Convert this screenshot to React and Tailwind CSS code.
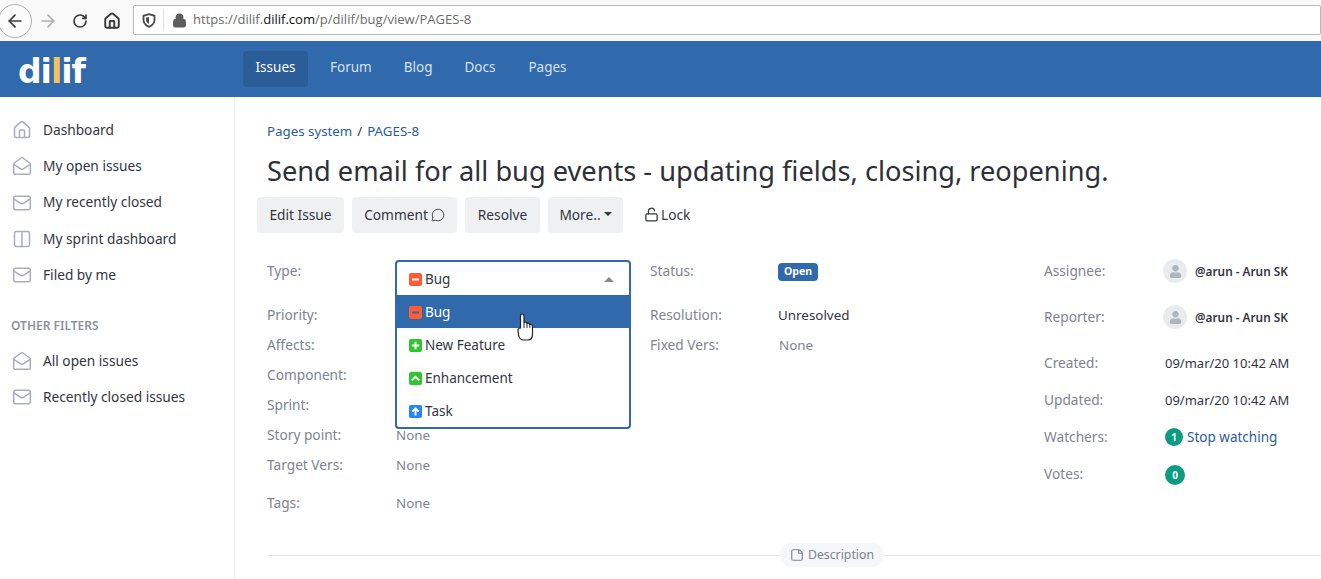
import { ArrowLeft, ArrowRight, RotateCw, Home, Lock, LockOpen, Mail, MailOpen, Columns2, MessageCircle, StickyNote } from "lucide-react";
import { FaUser } from "react-icons/fa";

const font = "[font-family:'Noto_Sans',sans-serif]";

const SideItem = ({ icon: Icon, label }) => (
  <div className="flex items-center h-[36.3px] pl-[12px]">
    <Icon size={20} strokeWidth={1.8} className="text-[#a9adbd] shrink-0" />
    <span className="ml-[11px] text-[13.7px] text-[#33363f]">{label}</span>
  </div>
);

const Field = ({ label, value, h }) => (
  <div className={`flex ${h}`}>
    <div className="w-[129px] text-[#80848f] text-[13.7px] leading-5">{label}</div>
    <div className="text-[#80848f] text-[13.4px] leading-5">{value}</div>
  </div>
);

const TypeIcon = ({ color, children }) => (
  <svg width="13" height="13" viewBox="0 0 13 13" className="shrink-0">
    <rect width="13" height="13" rx="2" fill={color} />
    {children}
  </svg>
);

const Minus = ({ stroke = "#fff" }) => <path d="M3 6.5h7" stroke={stroke} strokeWidth="2" />;

const Avatar = () => (
  <div className="w-[24px] h-[24px] rounded-full bg-[#e9ecef] flex items-center justify-center overflow-hidden">
    <FaUser size={13} className="text-[#adb5bd]" />
  </div>
);

const Person = () => (
  <div className="flex items-center self-start h-[24px] gap-[8px] -mt-[2px] -ml-[2px]">
    <Avatar />
    <span className="text-[11.8px] font-semibold text-[#33363f]">@arun - Arun SK</span>
  </div>
);

const Btn = ({ children, w }) => (
  <div className={`h-[36px] ${w} rounded bg-[#eff0f1] flex items-center justify-center text-[13.7px] text-[#33363f]`}>
    {children}
  </div>
);

export default function App() {
  return (
    <div className={`h-[579px] w-[1321px] overflow-hidden bg-white ${font}`}>
      {/* browser bar */}
      <div className="h-[41px] bg-[#f9f9fa] flex items-center relative">
        <div className="w-[34px] h-[34px] -ml-[2px] rounded-full border border-[#b1b1b3] bg-[#fbfbfb] flex items-center justify-center">
          <ArrowLeft size={20} strokeWidth={2} className="text-[#3b3b3b]" />
        </div>
        <ArrowRight size={20} strokeWidth={2} className="ml-[6px] text-[#b0b0b0]" />
        <RotateCw size={16} strokeWidth={2.5} className="ml-[14px] text-[#3b3b3b]" />
        <Home size={18} strokeWidth={2.6} className="ml-[15px] text-[#3b3b3b]" />
        <div className="ml-[12px] flex-1 h-[30px] -mt-[1px] bg-white border border-[#b9b9bb] rounded-[2px] flex items-center">
          <svg width="14" height="15" viewBox="0 0 14 15" className="ml-[8px]">
            <path d="M7 1.2 12.5 2.8V7c0 3-2.2 5.4-5.500 6.800C3.700 12.400 1.500 10 1.500 7V2.800Z" fill="none" stroke="#4a4a4a" strokeWidth="1.800" />
            <path d="M7 4V11C5 10 4 8.500 4 6.800V4.800Z" fill="#4a4a4a" />
          </svg>
          <div className="ml-[7px] w-px h-[22px] bg-[#e2e2e3]" />
          <Lock size={15} strokeWidth={2.5} className="ml-[8px] text-[#5c5c5c] fill-[#5c5c5c]" />
          <span className="ml-[6px] text-[13.05px] text-[#6b6b6b] [font-family:'Open_Sans',sans-serif]">
            https://dilif.<span className="text-[#111]">dilif.com</span>/p/dilif/bug/view/PAGES-8
          </span>
        </div>
      </div>

      {/* app header */}
      <div className="h-[56px] bg-[#306aad] flex items-center">
        <div className="w-[243px] pl-[18px] text-[33px] leading-none font-bold text-white [font-family:'DejaVu_Sans',sans-serif] tracking-[-1px] mt-[4px]">
          di<span className="text-[#f5c15c]">l</span>if
        </div>
        <div className="flex items-center -mt-[1px] text-[13.5px] text-[#d5e0ee]">
          <div className="h-[36px] w-[65px] pb-[2px] rounded bg-[#2a5c98] text-white flex items-center justify-center">Issues</div>
          <div className="ml-[22px] mb-[2px]">Forum</div>
          <div className="ml-[32px] mb-[2px]">Blog</div>
          <div className="ml-[32px] mb-[2px]">Docs</div>
          <div className="ml-[33px] mb-[2px]">Pages</div>
        </div>
      </div>

      <div className="flex h-[482px]">
        {/* sidebar */}
        <div className="w-[235px] shrink-0 border-r border-[#eceef1] pt-[15px]">
          <SideItem icon={Home} label="Dashboard" />
          <SideItem icon={MailOpen} label="My open issues" />
          <SideItem icon={Mail} label="My recently closed" />
          <SideItem icon={Columns2} label="My sprint dashboard" />
          <SideItem icon={Mail} label="Filed by me" />
          <div className="mt-[25px] mb-[8.5px] pl-[11px] text-[12px] leading-4 font-semibold text-[#8f929c]">OTHER FILTERS</div>
          <SideItem icon={MailOpen} label="All open issues" />
          <SideItem icon={Mail} label="Recently closed issues" />
        </div>

        {/* main */}
        <div className="flex-1 pl-[32px] pt-[24px] min-w-0">
          <div className="text-[13.3px] leading-5 text-[#33363f]">
            <span className="text-[#2a5d9c]">Pages system</span>
            <span className="mx-[5px]">/</span>
            <span className="text-[#2a5d9c]">PAGES-8</span>
          </div>
          <h1 className="mt-[9px] text-[27.2px] leading-[42px] text-[#2d3038] whitespace-nowrap">
            Send email for all bug events - updating fields, closing, reopening.
          </h1>
          <div className="mt-[5px] -ml-[10px] flex items-center gap-[8px]">
            <Btn w="w-[87px]">Edit Issue</Btn>
            <Btn w="w-[105px]">
              Comment
              <MessageCircle size={14} strokeWidth={1.5} className="ml-[3px]" />
            </Btn>
            <Btn w="w-[75px]">Resolve</Btn>
            <Btn w="w-[75px]">
              More..
              <span className="ml-[3px] mb-[2px] border-x-[4px] border-x-transparent border-t-[4px] border-t-[#33363f]" />
            </Btn>
            <div className="ml-[13px] flex items-center text-[13.7px] text-[#33363f]">
              <LockOpen size={15} strokeWidth={2} className="mr-[2px]" />
              Lock
            </div>
          </div>

          <div className="mt-[28px] flex">
            {/* left column */}
            <div className="w-[383px] relative">
              <Field label="Type:" h="h-[44px]" />
              <Field label="Priority:" h="h-[30px]" />
              <Field label="Affects:" h="h-[30px]" />
              <Field label="Component:" h="h-[30px]" />
              <Field label="Sprint:" h="h-[30px]" />
              <Field label="Story point:" value="None" h="h-[30px]" />
              <Field label="Target Vers:" value="None" h="h-[38px]" />
              <Field label="Tags:" value="None" h="h-[20px]" />

              {/* open select */}
              <div className="absolute left-[128px] -top-[1px] w-[236px] h-[169px] bg-white border-2 border-[#306aad] rounded-[4px] text-[13.5px] text-[#33363f] overflow-hidden">
                <div className="h-[33px] flex items-center pl-[12px] gap-[3px] pt-[2px]">
                  <TypeIcon color="#ff5b34"><Minus /></TypeIcon>
                  Bug
                  <span className="ml-auto mr-[15px] border-x-[5px] border-x-transparent border-b-[5px] border-b-[#868a93]" />
                </div>
                <div className="h-[33px] flex items-center pl-[12px] gap-[3px] pt-[1px] bg-[#306aad] text-white">
                  <TypeIcon color="#ff5b34"><Minus stroke="#3f659f" /></TypeIcon>
                  Bug
                </div>
                <div className="h-[33px] flex items-center pl-[12px] gap-[3px] pt-[1px]">
                  <TypeIcon color="#2fc52f">
                    <path d="M6.500 2.800v7.400M2.800 6.500h7.400" stroke="#fff" strokeWidth="2" />
                  </TypeIcon>
                  New Feature
                </div>
                <div className="h-[33px] flex items-center pl-[12px] gap-[3px] pt-[1px]">
                  <TypeIcon color="#2fc52f">
                    <path d="M2.800 8.500 6.500 4.800l3.700 3.700" stroke="#fff" strokeWidth="2" fill="none" />
                  </TypeIcon>
                  Enhancement
                </div>
                <div className="h-[33px] flex items-center pl-[12px] gap-[3px] pt-[1px]">
                  <TypeIcon color="#2684ff">
                    <path d="M6.500 10.500V3.500M3.300 6.500l3.200-3.200 3.200 3.200" stroke="#fff" strokeWidth="2" fill="none" />
                  </TypeIcon>
                  Task
                </div>
              </div>
              {/* mouse pointer */}
              <svg width="17" height="28" viewBox="0 0 17 28" className="absolute left-[250px] top-[52px]">
                <path
                  d="M3.500 15V3Q3.500 1 5.200 1Q7 1 7 3V10Q7 9 8.500 9Q10 9 10 10.500V11Q10 10.200 11.300 10.200Q12.800 10.200 12.800 12Q12.800 11.200 14 11.500Q15.500 11.800 15.500 13.500V21Q15.500 27 11 27H6.500Q2.500 27 1.500 22L1 17Q1 15 3.500 15Z"
                  fill="#fff"
                  stroke="#222"
                  strokeWidth="1.200"
                />
                <path d="M7 10v5M10 11v4M12.800 12v3" stroke="#222" strokeWidth="1" fill="none" />
              </svg>
            </div>

            {/* middle column */}
            <div className="w-[394px]">
              <div className="flex h-[44px]">
                <div className="w-[128px] text-[#80848f] text-[13.7px] leading-5">Status:</div>
                <div className="h-[18px] mt-[2px] px-[6px] rounded-[4px] bg-[#306aad] text-white text-[10.5px] font-bold flex items-center">Open</div>
              </div>
              <div className="flex h-[30px] text-[13.7px] leading-5">
                <div className="w-[128px] text-[#80848f]">Resolution:</div>
                <div className="text-[#33363f] text-[13.4px]">Unresolved</div>
              </div>
              <div className="flex h-[30px] text-[13.7px] leading-5 text-[#80848f]">
                <div className="w-[129px]">Fixed Vers:</div>
                <div className="text-[13.4px]">None</div>
              </div>
            </div>

            {/* right column */}
            <div className="flex-1 text-[13.7px] leading-5">
              <div className="flex h-[46px]">
                <div className="w-[121px] text-[#80848f]">Assignee:</div>
                <Person />
              </div>
              <div className="flex h-[46px]">
                <div className="w-[121px] text-[#80848f]">Reporter:</div>
                <Person />
              </div>
              <div className="flex h-[37px]">
                <div className="w-[121px] text-[#80848f]">Created:</div>
                <div className="text-[#33363f] text-[13px]">09/mar/20 10:42 AM</div>
              </div>
              <div className="flex h-[37px]">
                <div className="w-[121px] text-[#80848f]">Updated:</div>
                <div className="text-[#33363f] text-[13px]">09/mar/20 10:42 AM</div>
              </div>
              <div className="flex h-[37px]">
                <div className="w-[121px] text-[#80848f]">Watchers:</div>
                <div className="flex items-center gap-[4px] h-[20px]">
                  <span className="w-[18px] h-[18px] rounded-full bg-[#0a9d84] text-white text-[10px] font-bold flex items-center justify-center">1</span>
                  <span className="text-[#2a5d9c] text-[13.5px]">Stop watching</span>
                </div>
              </div>
              <div className="flex h-[20px]">
                <div className="w-[121px] text-[#80848f]">Votes:</div>
                <span className="w-[20px] h-[20px] mt-[1px] rounded-full bg-[#0a9d84] text-white text-[10px] font-bold flex items-center justify-center">0</span>
              </div>
            </div>
          </div>

          {/* divider */}
          <div className="mt-[30px] flex items-center">
            <div className="w-[513px] h-px bg-[#e6e7ea]" />
            <div className="w-[104px] h-[24px] rounded-full bg-[#f5f7fa] flex items-center justify-center gap-[4px] text-[12.3px] text-[#80848f]">
              <StickyNote size={14} strokeWidth={2} />
              Description
            </div>
            <div className="flex-1 h-px bg-[#e6e7ea]" />
          </div>
        </div>
      </div>
    </div>
  );
}
